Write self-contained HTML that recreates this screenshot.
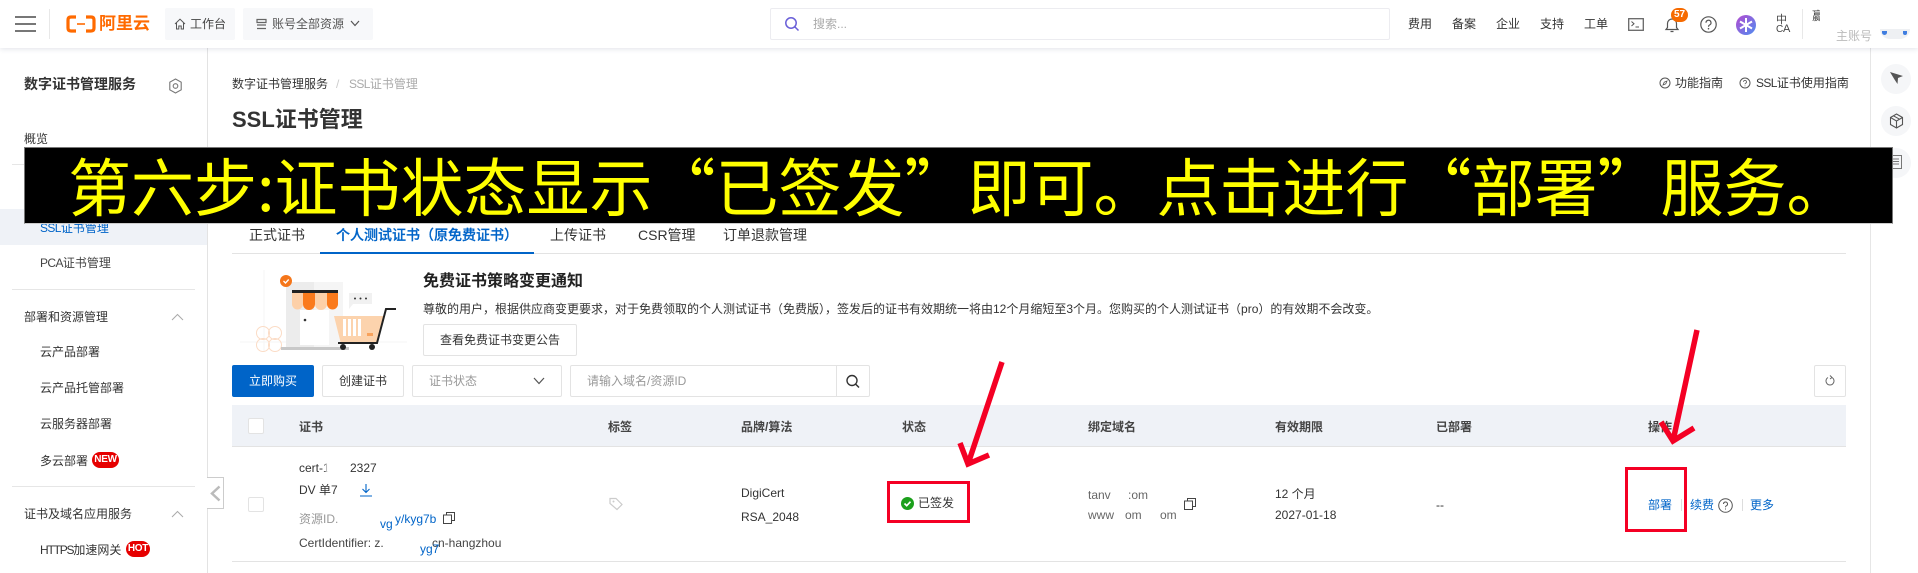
<!DOCTYPE html>
<html lang="zh-CN">
<head>
<meta charset="utf-8">
<title>SSL证书管理</title>
<style>
html,body{margin:0;padding:0;width:1918px;height:573px;overflow:hidden;background:#fff}
body{position:relative;font-family:"Liberation Sans","Noto Sans CJK SC",sans-serif;font-size:12px;color:#333}
.t{position:absolute;white-space:nowrap;line-height:16px;height:16px}
.b{position:absolute;box-sizing:border-box}
.btn{position:absolute;box-sizing:border-box;border:1px solid #e3e3e3;border-radius:2px;background:#fff;text-align:center;white-space:nowrap}
.blue{color:#0064c8}
.grey{color:#999}
.bd{font-weight:700}
.n{letter-spacing:-.6px}
.badge{position:absolute;background:#e60000;color:#fff;font-weight:700;font-size:10px;letter-spacing:-.3px;line-height:16px;height:16px;border-radius:8px;text-align:center}
svg{position:absolute;overflow:visible}
</style>
</head>
<body>

<!-- top bar -->
<div class="b" style="left:0;top:0;width:1918px;height:48px;background:#fff;box-shadow:0 1px 5px rgba(40,60,100,.14);z-index:3"></div>
<div style="position:absolute;left:0;top:0;width:1918px;height:48px;z-index:4">
  <div class="b" style="left:15px;top:16px;width:21px;height:2px;background:#777"></div>
  <div class="b" style="left:15px;top:23px;width:21px;height:2px;background:#777"></div>
  <div class="b" style="left:15px;top:30px;width:21px;height:2px;background:#777"></div>
  <div class="b" style="left:49px;top:9px;width:1px;height:30px;background:#e8e8e8"></div>
  <svg style="left:66px;top:15px" width="30" height="18" viewBox="0 0 30 18"><path d="M10 2H5Q2 2 2 5V13Q2 16 5 16H10M20 2H25Q28 2 28 5V13Q28 16 25 16H20" fill="none" stroke="#ff6a00" stroke-width="3.2"/><path d="M11 9H19" stroke="#ff6a00" stroke-width="1.6"/></svg>
  <div class="t bd" style="left:99px;top:15px;height:18px;line-height:18px;font-size:17px;color:#ff6a00">阿里云</div>

  <div class="b" style="left:165px;top:8px;width:70px;height:32px;background:#f7f8fa;border-radius:2px"></div>
  <svg style="left:174px;top:18px" width="12" height="12" viewBox="0 0 12 12"><path d="M1 6L6 1.2L11 6M2.5 5V11H4.8V8H7.2V11H9.500V5" fill="none" stroke="#555" stroke-width="1"/></svg>
  <div class="t" style="left:190px;top:16px;color:#444">工作台</div>
  <div class="b" style="left:243px;top:8px;width:130px;height:32px;background:#f7f8fa;border-radius:2px"></div>
  <svg style="left:256px;top:18px" width="11" height="12" viewBox="0 0 11 12"><path d="M1 1.500H10V4.500H1ZM1 7H10M1 10.500H10" fill="none" stroke="#666" stroke-width="1.200"/></svg>
  <div class="t" style="left:272px;top:16px;color:#555">账号全部资源</div>
  <svg style="left:350px;top:20px" width="10" height="7" viewBox="0 0 10 7"><path d="M1 1L5 5.500L9 1" fill="none" stroke="#555" stroke-width="1.200"/></svg>

  <div class="b" style="left:770px;top:8px;width:620px;height:32px;border:1px solid #ececf0;border-radius:2px;background:#fff"></div>
  <svg style="left:784px;top:16px" width="16" height="16" viewBox="0 0 16 16"><circle cx="7" cy="7" r="5.200" fill="none" stroke="#6a5fd8" stroke-width="1.500"/><path d="M11 11L14.500 14.500" stroke="#6a5fd8" stroke-width="1.500"/></svg>
  <div class="t" style="left:813px;top:16px;color:#aaa">搜索...</div>

  <div class="t" style="left:1408px;top:16px">费用</div>
  <div class="t" style="left:1452px;top:16px">备案</div>
  <div class="t" style="left:1496px;top:16px">企业</div>
  <div class="t" style="left:1540px;top:16px">支持</div>
  <div class="t" style="left:1584px;top:16px">工单</div>
  <svg style="left:1628px;top:18px" width="16" height="13" viewBox="0 0 16 13"><rect x=".7" y=".7" width="14.600" height="11.600" fill="none" stroke="#666" stroke-width="1.300"/><path d="M3.500 3.500L6 5.700L3.500 8M7.500 9H11" fill="none" stroke="#555" stroke-width="1"/></svg>
  <svg style="left:1664px;top:17px" width="16" height="16" viewBox="0 0 16 16"><path d="M2 12.500H14L12.500 10.500V6.500A4.500 4.500 0 0 0 3.500 6.500V10.500ZM6.500 14.500H9.500" fill="none" stroke="#555" stroke-width="1.200"/></svg>
  <div class="b" style="left:1671px;top:8px;width:17px;height:14px;border-radius:7px;background:#f66a00;color:#fff;font-size:10px;font-weight:700;line-height:14px;text-align:center">57</div>
  <svg style="left:1700px;top:16px" width="17" height="17" viewBox="0 0 17 17"><circle cx="8.500" cy="8.500" r="7.700" fill="none" stroke="#555" stroke-width="1.200"/><path d="M6 6.700A2.500 2.500 0 1 1 9.500 9C8.700 9.400 8.500 9.800 8.500 10.700" fill="none" stroke="#555" stroke-width="1.200"/><circle cx="8.500" cy="12.700" r=".8" fill="#555"/></svg>
  <svg style="left:1736px;top:15px" width="20" height="20" viewBox="0 0 20 20"><defs><linearGradient id="g" x1="0" y1="0" x2="1" y2="1"><stop offset="0" stop-color="#b44ad0"/><stop offset="1" stop-color="#4f8df0"/></linearGradient></defs><circle cx="10" cy="10" r="10" fill="url(#g)"/><path d="M10 3V17M4 6.500L16 13.500M16 6.500L4 13.500" stroke="#fff" stroke-width="2"/></svg>
  <div class="t" style="left:1776px;top:15px;font-size:11px;line-height:11px;height:11px;color:#444">中</div>
  <div class="t" style="left:1783px;top:24px;font-size:11px;line-height:11px;height:11px;color:#444">A</div>
  <div class="t" style="left:1776px;top:24px;font-size:10px;line-height:11px;height:11px;color:#444">C</div>
  <div class="b" style="left:1802px;top:9px;width:1px;height:30px;background:#e8e8e8"></div>
  <div class="t" style="left:1812px;top:8px;width:8px;overflow:hidden;color:#444">赢</div>
  <div class="t" style="left:1836px;top:28px;color:#bbb">主账号</div>
  <div class="b" style="left:1880px;top:29px;width:30px;height:10px;background:#eef0f3;border-radius:0 0 14px 14px"></div>
  <div class="b" style="left:1882px;top:31px;width:5px;height:4px;background:#3f7de0;border-radius:0 0 3px 3px"></div>
  <div class="b" style="left:1903px;top:31px;width:4px;height:4px;background:#3f7de0;border-radius:0 0 3px 3px"></div>
</div>

<!-- sidebar -->
<div class="b" style="left:207px;top:48px;width:1px;height:525px;background:#e3e3e3"></div>
<div class="t bd" style="left:24px;top:76px;font-size:14px;color:#333">数字证书管理服务</div>
<svg style="left:168px;top:78px" width="15" height="16" viewBox="0 0 15 16"><path d="M7.500 1L13.200 4.200V11.800L7.500 15L1.800 11.800V4.200Z" fill="none" stroke="#777" stroke-width="1.100"/><circle cx="7.500" cy="8" r="2.300" fill="none" stroke="#777" stroke-width="1.100"/></svg>
<div class="t" style="left:24px;top:131px">概览</div>
<div class="b" style="left:12px;top:164px;width:183px;height:1px;background:#e6e6e6"></div>
<div class="b" style="left:0;top:209px;width:207px;height:36px;background:#eff2f7"></div>
<div class="t blue" style="left:40px;top:220px"><span class="n">SSL</span>证书管理</div>
<div class="t" style="left:40px;top:255px;color:#444"><span class="n">PCA</span>证书管理</div>
<div class="b" style="left:12px;top:289px;width:183px;height:1px;background:#e6e6e6"></div>
<div class="t" style="left:24px;top:309px">部署和资源管理</div>
<svg style="left:171px;top:313px" width="13" height="8" viewBox="0 0 13 8"><path d="M1 7L6.500 1.500L12 7" fill="none" stroke="#aaa" stroke-width="1"/></svg>
<div class="t" style="left:40px;top:344px">云产品部署</div>
<div class="t" style="left:40px;top:380px">云产品托管部署</div>
<div class="t" style="left:40px;top:416px">云服务器部署</div>
<div class="t" style="left:40px;top:453px">多云部署</div>
<div class="badge" style="left:92px;top:452px;width:27px">NEW</div>
<div class="b" style="left:12px;top:486px;width:183px;height:1px;background:#e6e6e6"></div>
<div class="t" style="left:24px;top:506px">证书及域名应用服务</div>
<svg style="left:171px;top:510px" width="13" height="8" viewBox="0 0 13 8"><path d="M1 7L6.500 1.500L12 7" fill="none" stroke="#aaa" stroke-width="1"/></svg>
<div class="t" style="left:40px;top:542px"><span style="letter-spacing:-1.2px">HTTPS</span>加速网关</div>
<div class="badge" style="left:126px;top:541px;width:24px">HOT</div>
<div class="b" style="left:207px;top:477px;width:17px;height:32px;background:#fff;border:1px solid #ccc;border-left:0"></div>
<svg style="left:210px;top:485px" width="11" height="17" viewBox="0 0 11 17"><path d="M9.500 1.500L2 8.500L9.500 15.500" fill="none" stroke="#bbb" stroke-width="2.500"/></svg>

<!-- header -->
<div class="t" style="left:232px;top:76px">数字证书管理服务</div>
<div class="t" style="left:336px;top:76px;color:#ccc">/</div>
<div class="t" style="left:349px;top:76px;color:#aaa"><span class="n">SSL</span>证书管理</div>
<div class="t bd" style="left:232px;top:108px;font-size:22px;line-height:24px;height:24px;color:#333">SSL证书管理</div>

<svg style="left:1659px;top:77px" width="12" height="12" viewBox="0 0 12 12"><circle cx="6" cy="6" r="5" fill="none" stroke="#555"/><path d="M8 4L6.800 6.800L4 8L5.200 5.200Z" fill="none" stroke="#555" stroke-width=".8"/></svg>
<div class="t" style="left:1675px;top:75px">功能指南</div>
<svg style="left:1739px;top:77px" width="12" height="12" viewBox="0 0 12 12"><circle cx="6" cy="6" r="5" fill="none" stroke="#555"/><path d="M4.500 4.800A1.500 1.500 0 1 1 6.500 6.300C6 6.600 6 6.800 6 7.300M6 8.500V9.300" fill="none" stroke="#555" stroke-width=".8"/></svg>
<div class="t" style="left:1756px;top:75px"><span class="n">SSL</span>证书使用指南</div>

<!-- right rail -->
<div class="b" style="left:1870px;top:48px;width:1px;height:525px;background:#e6e6e6"></div>
<div class="b" style="left:1881px;top:64px;width:30px;height:30px;border-radius:50%;background:#f5f6f8"></div>
<svg style="left:1889px;top:71px" width="15" height="15" viewBox="0 0 15 15"><path d="M1 1L14 5L9 7L8.500 13L5.500 8.500Z" fill="#555"/></svg>
<div class="b" style="left:1881px;top:106px;width:30px;height:30px;border-radius:50%;background:#f5f6f8"></div>
<svg style="left:1889px;top:113px" width="15" height="16" viewBox="0 0 15 16"><path d="M7.500 1L13.500 4.500V11.500L7.500 15L1.500 11.500V4.500ZM1.500 4.500L7.500 8L13.500 4.500M7.500 8V15M4.500 2.800L10.500 6.200" fill="none" stroke="#555" stroke-width="1.100"/></svg>
<div class="b" style="left:1881px;top:148px;width:30px;height:30px;border-radius:50%;background:#f5f6f8"></div>
<svg style="left:1890px;top:155px" width="12" height="14" viewBox="0 0 12 14"><rect x=".5" y=".5" width="11" height="13" fill="none" stroke="#777"/><path d="M3 4H9M3 6.500H9M3 9H9" stroke="#777"/></svg>

<!-- tabs -->
<div class="b" style="left:232px;top:253px;width:1614px;height:1px;background:#e3e3e3"></div>
<div class="b" style="left:320px;top:252px;width:214px;height:2px;background:#0064c8"></div>
<div class="t" style="left:249px;top:227px;font-size:14px">正式证书</div>
<div class="t blue" style="left:336px;top:227px;font-size:14px;font-weight:500;-webkit-text-stroke:.25px #0064c8">个人测试证书（原免费证书）</div>
<div class="t" style="left:550px;top:227px;font-size:14px">上传证书</div>
<div class="t" style="left:638px;top:227px;font-size:14px">CSR管理</div>
<div class="t" style="left:723px;top:227px;font-size:14px">订单退款管理</div>

<!-- illustration -->
<svg style="left:240px;top:270px" width="168" height="84" viewBox="240 270 168 84">
  <path d="M240 342H407M264 270V352" stroke="#f6f6f6" fill="none"/>
  <g fill="none" stroke="#fbdcc6"><circle cx="263" cy="333" r="6.500"/><circle cx="275" cy="333" r="6.500"/><circle cx="263" cy="345" r="6.500"/><circle cx="275" cy="345" r="6.500"/></g>
  <rect x="286" y="282" width="57" height="66" fill="#ececec"/>
  <rect x="314" y="282" width="29" height="66" fill="#f5f5f5"/>
  <rect x="281" y="347" width="68" height="3" fill="#c8c8c8"/>
  <rect x="300" y="310" width="29" height="35" fill="#fff"/>
  <circle cx="305" cy="320" r="1.300" fill="#333"/>
  <path d="M292 293H303V304A5.500 5.500 0 0 1 292 304Z" fill="#fdd0a8"/>
  <path d="M303 293H315V304A6 6 0 0 1 303 304Z" fill="#fa7a1c"/>
  <path d="M315 293H327V304A6 6 0 0 1 315 304Z" fill="#fdd0a8"/>
  <path d="M327 293H338V304A5.500 5.500 0 0 1 327 304Z" fill="#fa7a1c"/>
  <rect x="292" y="290" width="46" height="3" fill="#222"/>
  <circle cx="286" cy="281" r="6" fill="#f5761a"/>
  <path d="M283.500 281L285.500 283L288.700 279.500" fill="none" stroke="#fff" stroke-width="1.300"/>
  <path d="M349 293H372V304H353L349 309Z" fill="#f1f1f1"/>
  <circle cx="355" cy="298.500" r="1" fill="#333"/><circle cx="360.500" cy="298.500" r="1" fill="#333"/><circle cx="366" cy="298.500" r="1" fill="#333"/>
  <path d="M334 316H384L377 344H341Z" fill="#fcd3ad"/>
  <path d="M343 319H346V336H343ZM348 319H351V336H348ZM353 319H356V336H353ZM358 319H361V336H358Z" fill="#fff"/>
  <rect x="367" y="333" width="6" height="3" fill="#f8a25c"/>
  <path d="M396 309H386L377 343H338" fill="none" stroke="#222" stroke-width="2"/>
  <circle cx="343" cy="347" r="3" fill="#222"/><circle cx="372" cy="347" r="3" fill="#222"/>
</svg>

<!-- notice -->
<div class="t bd" style="left:423px;top:274px;font-size:16px;color:#222">免费证书策略变更通知</div>
<div class="t" style="left:423px;top:301px">尊敬的用户，根据供应商变更要求，对于免费领取的个人测试证书（免费版），签发后的证书有效期统一将由12个月缩短至3个月。您购买的个人测试证书（pro）的有效期不会改变。</div>
<div class="btn" style="left:423px;top:324px;width:154px;height:32px;line-height:30px">查看免费证书变更公告</div>

<!-- toolbar -->
<div class="b" style="left:232px;top:365px;width:82px;height:32px;background:#0064c8;border-radius:2px;color:#fff;text-align:center;line-height:32px">立即购买</div>
<div class="btn" style="left:322px;top:365px;width:82px;height:32px;line-height:30px">创建证书</div>
<div class="btn" style="left:412px;top:365px;width:150px;height:32px"></div>
<div class="t" style="left:429px;top:373px;color:#999">证书状态</div>
<svg style="left:533px;top:377px" width="12" height="8" viewBox="0 0 12 8"><path d="M1 1L6 6.500L11 1" fill="none" stroke="#555" stroke-width="1.200"/></svg>
<div class="btn" style="left:570px;top:365px;width:300px;height:32px"></div>
<div class="b" style="left:836px;top:365px;width:1px;height:32px;background:#e3e3e3"></div>
<div class="t" style="left:587px;top:373px;color:#999">请输入域名/资源ID</div>
<svg style="left:845px;top:374px" width="16" height="15" viewBox="0 0 16 15"><circle cx="7" cy="6.500" r="5" fill="none" stroke="#333" stroke-width="1.400"/><path d="M10.500 10L14 13.500" stroke="#333" stroke-width="1.500"/></svg>
<div class="btn" style="left:1814px;top:365px;width:32px;height:32px"></div>
<svg style="left:1825px;top:375px" width="10" height="12" viewBox="0 0 10 12"><path d="M3 2.500A4 4 0 1 0 7 2.500M5 .5L7 2.500L5 4" fill="none" stroke="#666"/></svg>

<!-- table -->
<div class="b" style="left:232px;top:405px;width:1614px;height:42px;background:#eff2f7;border-bottom:1px solid #e3e3e3"></div>
<div class="b" style="left:248px;top:418px;width:16px;height:16px;background:#fff;border:1px solid #e3e3e3;border-radius:2px"></div>
<div class="t bd" style="left:299px;top:419px;color:#444">证书</div>
<div class="t bd" style="left:608px;top:419px;color:#444">标签</div>
<div class="t bd" style="left:741px;top:419px;color:#444">品牌/算法</div>
<div class="t bd" style="left:902px;top:419px;color:#444">状态</div>
<div class="t bd" style="left:1088px;top:419px;color:#444">绑定域名</div>
<div class="t bd" style="left:1275px;top:419px;color:#444">有效期限</div>
<div class="t bd" style="left:1436px;top:419px;color:#444">已部署</div>
<div class="t bd" style="left:1648px;top:419px;color:#444">操作</div>

<div class="b" style="left:248px;top:497px;width:16px;height:15px;background:#fff;border:1px solid #e3e3e3;border-radius:2px"></div>
<div class="t" style="left:299px;top:460px">cert-1</div>
<div class="b" style="left:326px;top:458px;width:22px;height:20px;background:#fff;filter:blur(1px)"></div>
<div class="t" style="left:350px;top:460px">2327</div>
<div class="t" style="left:299px;top:482px">DV 单7</div>
<svg style="left:359px;top:483px" width="14" height="14" viewBox="0 0 14 14"><path d="M7 1V9.500M3.500 6L7 9.500L10.500 6M1 13H13" fill="none" stroke="#0064c8" stroke-width="1.100"/></svg>
<div class="t grey" style="left:299px;top:511px">资源ID.</div>
<div class="t blue" style="left:380px;top:516px">vg</div>
<div class="t blue" style="left:395px;top:511px">y/kyg7b</div>
<svg style="left:443px;top:512px" width="12" height="12" viewBox="0 0 12 12"><rect x=".5" y="3" width="8" height="8.500" fill="none" stroke="#444"/><path d="M3.500 3V.5H11.500V8.500H8.500" fill="none" stroke="#444"/></svg>
<div class="t" style="left:299px;top:535px;color:#444">CertIdentifier: z.</div>
<div class="t" style="left:432px;top:535px;color:#444">cn-hangzhou</div>
<div class="t blue" style="left:420px;top:541px">yg7</div>
<svg style="left:609px;top:497px" width="14" height="14" viewBox="0 0 14 14"><path d="M1 1.500H7L13 7.500L8 12.500L1 6.500Z" fill="none" stroke="#ccc" stroke-width="1.200"/><circle cx="4.500" cy="4.500" r="1" fill="#ccc"/></svg>
<div class="t" style="left:741px;top:485px">DigiCert</div>
<div class="t" style="left:741px;top:509px">RSA_2048</div>
<svg style="left:901px;top:497px" width="13" height="13" viewBox="0 0 13 13"><circle cx="6.500" cy="6.500" r="6.500" fill="#1ba01b"/><path d="M3.500 6.500L5.700 8.700L9.500 4.700" fill="none" stroke="#fff" stroke-width="1.700"/></svg>
<div class="t" style="left:918px;top:495px">已签发</div>
<div class="t" style="left:1088px;top:487px;color:#666">tanv</div>
<div class="t" style="left:1128px;top:487px;color:#666">:om</div>
<div class="t" style="left:1088px;top:507px;color:#666">www</div>
<div class="t" style="left:1125px;top:507px;color:#666">om</div>
<div class="t" style="left:1160px;top:507px;color:#666">om</div>
<svg style="left:1184px;top:498px" width="12" height="12" viewBox="0 0 12 12"><rect x=".5" y="3" width="8" height="8.500" fill="none" stroke="#444"/><path d="M3.500 3V.5H11.500V8.500H8.500" fill="none" stroke="#444"/></svg>
<div class="t" style="left:1275px;top:486px">12 个月</div>
<div class="t" style="left:1275px;top:507px">2027-01-18</div>
<div class="t" style="left:1436px;top:497px">--</div>
<div class="t blue" style="left:1648px;top:497px">部署</div>
<div class="b" style="left:1681px;top:499px;width:1px;height:12px;background:#ddd"></div>
<div class="t blue" style="left:1690px;top:497px">续费</div>
<svg style="left:1718px;top:498px" width="15" height="15" viewBox="0 0 15 15"><circle cx="7.500" cy="7.500" r="6.800" fill="none" stroke="#555"/><path d="M5.500 6A2 2 0 1 1 8.300 7.800C7.700 8.100 7.500 8.400 7.500 9.200M7.500 10.500V11.500" fill="none" stroke="#555"/></svg>
<div class="b" style="left:1742px;top:499px;width:1px;height:12px;background:#ddd"></div>
<div class="t blue" style="left:1750px;top:497px">更多</div>
<div class="b" style="left:232px;top:561px;width:1614px;height:1px;background:#e3e3e3"></div>

<!-- annotations -->
<div class="b" style="left:887px;top:481px;width:83px;height:42px;border:3px solid #f40024"></div>
<div class="b" style="left:1625px;top:467px;width:62px;height:65px;border:3px solid #f40024"></div>
<svg style="left:0;top:0;z-index:6" width="1918" height="573" viewBox="0 0 1918 573">
  <path d="M1002 362L968 464M960 443L968 464L989 455" fill="none" stroke="#f40024" stroke-width="5.500"/>
  <path d="M1697 330L1673 441M1661 422L1673 441L1694 428" fill="none" stroke="#f40024" stroke-width="5.500"/>
</svg>

<!-- banner -->
<div class="b" style="left:24px;top:147px;width:1869px;height:77px;background:#000;border:1px solid #777;border-bottom-color:#ccc;z-index:5;overflow:hidden">
  <div style="position:absolute;left:43px;top:-3px;font-family:'Noto Sans CJK SC','Liberation Sans',sans-serif;font-size:63px;line-height:80px;color:#ff0;white-space:nowrap">第六步:证书状态显示“已签发”即可。点击进行“部署”服务。</div>
</div>

</body>
</html>
